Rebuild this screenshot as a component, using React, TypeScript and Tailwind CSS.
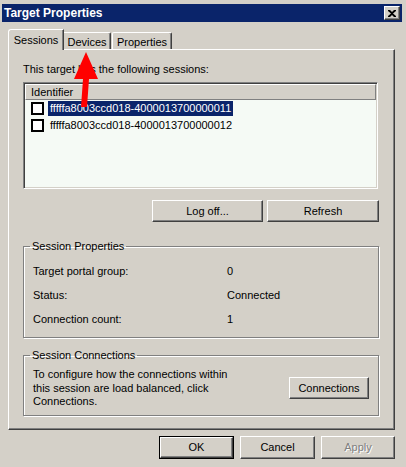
import React from "react";

const raised =
  "border border-t-white border-l-white border-r-[#404040] border-b-[#404040] shadow-[inset_-1px_-1px_0_#808080]";

const Btn = ({ label, w, h, isDefault, disabled }: { label: string; w: string; h: string; isDefault?: boolean; disabled?: boolean }) => {
  if (isDefault) {
    return (
      <div className={`${w} ${h} border border-black flex`}>
        <div className={`flex-1 flex items-center justify-center ${raised}`}>{label}</div>
      </div>
    );
  }
  return (
    <div className={`${w} ${h} flex items-center justify-center ${raised}`}>
      <span className={disabled ? "text-[#808080] [text-shadow:1px_1px_0_#fff]" : ""}>{label}</span>
    </div>
  );
};

const CheckBox = () => <div className="w-[13px] h-[13px] border-2 border-black bg-white shrink-0" />;

const App = () => {
  return (
    <div className="w-[406px] h-[467px] bg-[#d4d0c8] font-['Liberation_Sans',Arial,sans-serif] text-[11px] leading-[13px] text-black pl-[2px] pt-[4px] relative overflow-hidden">
      {/* title bar */}
      <div className="w-[400px] h-[18px] bg-[#0a246a] flex items-center justify-between pl-[2px] pr-[2px]">
        <span className="text-white font-bold text-[12px] leading-[14px]">Target Properties</span>
        <div className={`w-[16px] h-[14px] bg-[#d4d0c8] flex items-center justify-center ${raised}`}>
          <svg width="8" height="7" viewBox="0 0 8 7">
            <path d="M0 0h2l2 2 2-2h2v1l-3 2.5 3 2.5v1h-2l-2-2-2 2h-2v-1l3-2.5-3-2.5z" fill="#000" />
          </svg>
        </div>
      </div>

      <div className="pl-[6px] pt-[7px]">
        {/* tabs */}
        <div className="flex items-end h-[20px] relative z-10">
          <div className="w-[56px] h-[21px] -mb-[1px] bg-[#d4d0c8] border-t border-l border-white border-r-[#404040] border-r rounded-tl-[3px] flex justify-center pt-[4px] shadow-[inset_-1px_0_0_#808080]">
            Sessions
          </div>
          <div className="w-[47px] h-[17px] border-t border-white border-r border-r-[#404040] rounded-tr-[2px] flex justify-center pt-[3px] shadow-[inset_-1px_0_0_#808080]">
            Devices
          </div>
          <div className="w-[60px] h-[17px] ml-[1px] border-t border-l border-white border-r border-r-[#404040] rounded-t-[2px] flex justify-center pt-[3px] shadow-[inset_-1px_0_0_#808080]">
            Properties
          </div>
        </div>

        {/* tab panel */}
        <div className={`w-[387px] h-[381px] pl-[14px] pt-[13px] ${raised}`}>
          <div>This target has the following sessions:</div>

          {/* list view */}
          <div className="mt-[6px] w-[355px] h-[107px] bg-[#f5faf5] border border-t-[#808080] border-l-[#808080] border-r-white border-b-white shadow-[inset_1px_1px_0_#404040,inset_-1px_-1px_0_#d4d0c8] p-[1px]">
            <div className="h-[16px] bg-[#d4d0c8] border border-t-white border-l-white border-r-[#808080] border-b-[#808080] pl-[5px] flex items-center">
              Identifier
            </div>
            <div className="h-[17px] flex items-center pl-[6px] gap-[4px]">
              <CheckBox />
              <span className="h-[15px] px-[2px] bg-[#0a246a] text-white flex items-center">fffffa8003ccd018-4000013700000011</span>
            </div>
            <div className="h-[17px] flex items-center pl-[6px] gap-[4px]">
              <CheckBox />
              <span className="h-[15px] px-[2px] flex items-center">fffffa8003ccd018-4000013700000012</span>
            </div>
          </div>

          <div className="w-[356px] mt-[11px] flex justify-end gap-[4px]">
            <Btn label="Log off..." w="w-[111px]" h="h-[22px]" />
            <Btn label="Refresh" w="w-[112px]" h="h-[22px]" />
          </div>

          {/* session properties */}
          <fieldset className="mt-[18px] w-[356px] h-[98px] border border-[#808080] shadow-[1px_1px_0_#fff,inset_1px_1px_0_#fff] pl-[9px]">
            <legend className="-ml-[3px] px-[2px]">Session Properties</legend>
            <div className="pt-[6px] grid grid-cols-[194px_1fr]">
              <div className="h-[24px] flex items-center">Target portal group:</div>
              <div className="h-[24px] flex items-center">0</div>
              <div className="h-[24px] flex items-center">Status:</div>
              <div className="h-[24px] flex items-center">Connected</div>
              <div className="h-[24px] flex items-center">Connection count:</div>
              <div className="h-[24px] flex items-center">1</div>
            </div>
          </fieldset>

          {/* session connections */}
          <fieldset className="mt-[11px] w-[356px] h-[67px] border border-[#808080] shadow-[1px_1px_0_#fff,inset_1px_1px_0_#fff] pl-[9px] pr-[9px]">
            <legend className="-ml-[3px] px-[2px]">Session Connections</legend>
            <div className="pt-[6px] flex items-center justify-between">
              <p className="w-[200px] leading-[13.5px]">
                To configure how the connections within this session are load balanced, click Connections.
              </p>
              <Btn label="Connections" w="w-[80px]" h="h-[22px]" />
            </div>
          </fieldset>
        </div>

        {/* dialog buttons */}
        <div className="w-[387px] mt-[6px] flex justify-end gap-[6px]">
          <Btn label="OK" w="w-[75px]" h="h-[23px]" isDefault />
          <Btn label="Cancel" w="w-[75px]" h="h-[23px]" />
          <Btn label="Apply" w="w-[74px]" h="h-[23px]" disabled />
        </div>
      </div>

      {/* red annotation arrow */}
      <svg className="absolute left-0 top-0 pointer-events-none" width="406" height="467">
        <polygon points="86,52 98,79 89,79 87,107 81,107 83,79 74,79" fill="#ff0000" />
      </svg>
    </div>
  );
};

export default App;
